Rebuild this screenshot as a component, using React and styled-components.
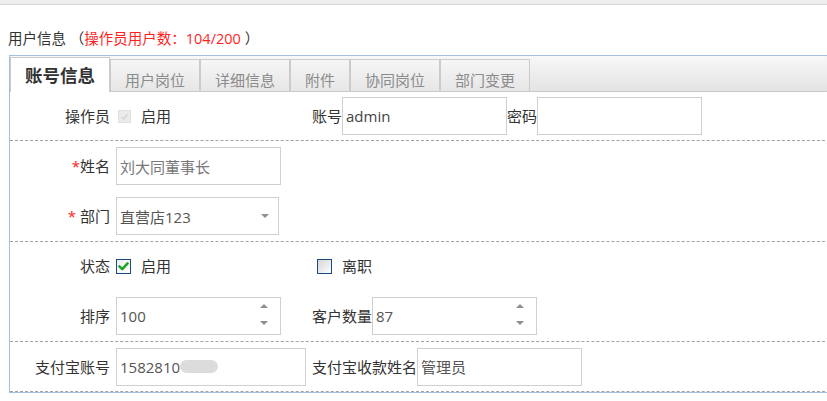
import React from 'react';
import styled, { createGlobalStyle } from 'styled-components';

const Global = createGlobalStyle`
  html, body { margin: 0; padding: 0; overflow: hidden; background: #fff; }
  body { font-family: "Open Sans", "Noto Sans CJK SC", sans-serif; color: #333; }
`;

const TopStrip = styled.div`
  height: 4px;
  background: #eeeeee;
  border-bottom: 1px solid #d6d6d6;
`;

const Title = styled.div`
  font-size: 14.5px;
  line-height: 20px;
  height: 20px;
  padding: 23px 0 0 8px;
  color: #333;
  white-space: nowrap;
`;

const Red = styled.span`
  color: #ff1f1f;
`;

const Wide = styled.span`
  display: inline-block;
  width: 1em;
  text-align: ${p => p.$align || 'center'};
  font-family: "Noto Sans CJK SC", sans-serif;
`;

const Panel = styled.div`
  margin: 7px 0 0 9px;
  width: 830px;
  border: 1px solid #a6bee0;
  border-right: none;
`;

const TabBar = styled.div`
  display: flex;
  align-items: flex-end;
  height: 35px;
  border-bottom: 1px solid #c9c9c9;
  background: linear-gradient(#f8f8f8, #e3e3e3);
`;

const Tab = styled.div`
  box-sizing: border-box;
  border: 1px solid #cbcbcb;
  border-bottom: none;
  padding: ${p => (p.$active ? '4px 14px 0' : '10px 14px 0')};
  height: ${p => (p.$active ? '35px' : '32px')};
  margin-bottom: ${p => (p.$active ? '-1px' : '0')};
  background: ${p => (p.$active ? '#fff' : 'linear-gradient(#f6f6f6, #e6e6e6)')};
  color: ${p => (p.$active ? '#333' : '#8c8c8c')};
  font-size: ${p => (p.$active ? '17.5px' : '15px')};
  font-weight: ${p => (p.$active ? 700 : 400)};
  line-height: ${p => (p.$active ? '26px' : '20px')};
  white-space: nowrap;
`;

const Section = styled.div`
  border-bottom: 1px dashed #a2a2a2;
`;

const Line = styled.div`
  display: flex;
  align-items: center;
  height: ${p => p.$h}px;
`;

const Group = styled.div`
  display: flex;
  align-items: center;
  flex-shrink: 0;
  width: ${p => (p.$w ? `${p.$w}px` : 'auto')};
  margin-left: ${p => p.$ml || 0}px;
`;

const Label = styled.div`
  width: 100px;
  margin-right: 6px;
  text-align: right;
  font-size: 15px;
  line-height: 20px;
  white-space: nowrap;
  color: #333;
`;

const InlineLabel = styled.span`
  font-size: 15px;
  line-height: 20px;
  white-space: nowrap;
  color: #333;
`;

const Star = styled.span`
  color: #ff2020;
`;

const Box = styled.div`
  box-sizing: border-box;
  width: ${p => p.$w}px;
  height: 38px;
  border: 1px solid #cfcfcf;
  display: flex;
  align-items: center;
  padding: 0 3px;
  font-size: 15px;
  color: ${p => p.$color || '#555'};
  white-space: nowrap;
  background: #fff;
`;

const BoxText = styled.span`
  flex: 1;
  display: flex;
  align-items: center;
`;

const Spinner = styled.div`
  display: flex;
  flex-direction: column;
  justify-content: space-between;
  align-self: stretch;
  padding: 6px 0 9px;
  margin-right: 9px;
`;

const Caret = styled.div`
  margin-right: 6px;
  display: flex;
`;

const CheckText = styled.span`
  font-size: 15px;
  line-height: 20px;
  margin-left: 10px;
  color: #333;
`;

const CheckWrap = styled.span`
  display: inline-flex;
  margin-left: ${p => p.$ml || 0}px;
`;

const Blur = styled.span`
  display: inline-block;
  width: 38px;
  height: 13px;
  border-radius: 7px;
  background: #dcdcdc;
  filter: blur(0.7px);
`;

const Tri = ({ up }) => (
  <svg width="8" height="4" viewBox="0 0 8 4">
    <path d={up ? 'M0 4 L4 0 L8 4 Z' : 'M0 0 L8 0 L4 4 Z'} fill="#8f8f8f" />
  </svg>
);

const Checkbox = ({ variant, ml }) => {
  if (variant === 'disabled') {
    return (
      <CheckWrap $ml={ml}>
        <svg width="13" height="13" viewBox="0 0 13 13">
          <rect x="0.5" y="0.5" width="12" height="12" fill="#ebebeb" stroke="#e0e0e0" />
          <path d="M3.5 6.8 L5.6 9 L9.6 4.2" fill="none" stroke="#d6d6d6" strokeWidth="1.6" />
        </svg>
      </CheckWrap>
    );
  }
  return (
    <CheckWrap $ml={ml}>
      <svg width="15" height="15" viewBox="0 0 15 15">
        <defs>
          <linearGradient id={`g-${variant}`} x1="0" y1="0" x2="1" y2="1">
            <stop offset="0" stopColor={variant === 'checked' ? '#eeeeee' : '#d4d4d4'} />
            <stop offset="1" stopColor="#ffffff" />
          </linearGradient>
        </defs>
        <rect x="0.5" y="0.5" width="14" height="14" fill={`url(#g-${variant})`} stroke="#1d4a7c" />
        {variant === 'checked' && (
          <path d="M3.4 7.4 L6.2 10.2 L11.6 4.4" fill="none" stroke="#1fa52b" strokeWidth="2.6" strokeLinecap="round" strokeLinejoin="round" />
        )}
      </svg>
    </CheckWrap>
  );
};

export default function App() {
  return (
    <>
      <Global />
      <TopStrip />
      <Title>
        用户信息 <Wide $align="right">（</Wide>
        <Red>操作员用户数<Wide>：</Wide>104/200</Red> <Wide $align="left">）</Wide>
      </Title>
      <Panel>
        <TabBar>
          <Tab $active>账号信息</Tab>
          <Tab>用户岗位</Tab>
          <Tab>详细信息</Tab>
          <Tab>附件</Tab>
          <Tab>协同岗位</Tab>
          <Tab>部门变更</Tab>
        </TabBar>

        <Section>
          <Line $h={48}>
            <Group $w={302}>
              <Label>操作员</Label>
              <Checkbox variant="disabled" ml={2} />
              <CheckText>启用</CheckText>
            </Group>
            <Group>
              <InlineLabel>账号</InlineLabel>
              <Box $w={165} $color="#444">admin</Box>
              <InlineLabel>密码</InlineLabel>
              <Box $w={165} />
            </Group>
          </Line>
        </Section>

        <Section>
          <Line $h={50}>
            <Group $w={302}>
              <Label><Star>*</Star>姓名</Label>
              <Box $w={165} $color="#777">刘大同董事长</Box>
            </Group>
          </Line>
          <Line $h={50}>
            <Group $w={302}>
              <Label><Star>*</Star> 部门</Label>
              <Box $w={163}>
                <BoxText>直营店123</BoxText>
                <Caret><Tri /></Caret>
              </Box>
            </Group>
          </Line>
        </Section>

        <Section>
          <Line $h={48}>
            <Group $w={302}>
              <Label>状态</Label>
              <Checkbox variant="checked" />
              <CheckText>启用</CheckText>
            </Group>
            <Group $ml={5}>
              <Checkbox variant="empty" />
              <CheckText>离职</CheckText>
            </Group>
          </Line>
          <Line $h={51}>
            <Group $w={302}>
              <Label>排序</Label>
              <Box $w={165}>
                <BoxText>100</BoxText>
                <Spinner><Tri up /><Tri /></Spinner>
              </Box>
            </Group>
            <Group>
              <InlineLabel>客户数量</InlineLabel>
              <Box $w={165}>
                <BoxText>87</BoxText>
                <Spinner><Tri up /><Tri /></Spinner>
              </Box>
            </Group>
          </Line>
        </Section>

        <Section>
          <Line $h={49}>
            <Group $w={302}>
              <Label>支付宝账号</Label>
              <Box $w={190}>
                <BoxText>1582810<Blur /></BoxText>
              </Box>
            </Group>
            <Group>
              <InlineLabel>支付宝收款姓名</InlineLabel>
              <Box $w={165}>管理员</Box>
            </Group>
          </Line>
        </Section>
      </Panel>
    </>
  );
}
